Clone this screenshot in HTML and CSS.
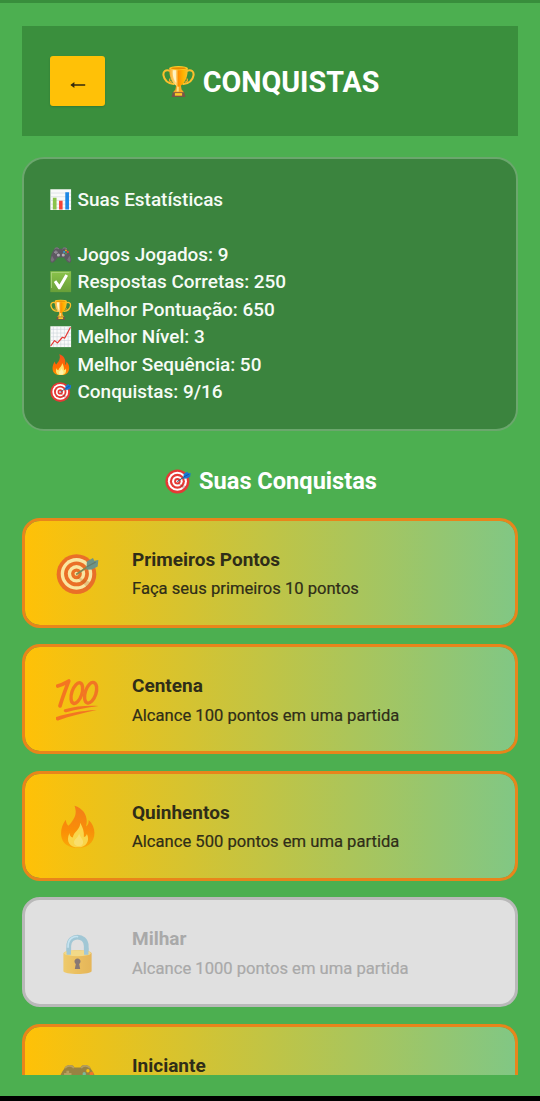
FILE: index.html
```html
<!DOCTYPE html>
<html lang="pt-BR">
<head>
<meta charset="utf-8">
<title>Conquistas</title>
<link rel="stylesheet" href="styles.css">
</head>
<body>
<svg class="sprite" aria-hidden="true">
  <defs>
    <linearGradient id="gold" x1="0" x2="1"><stop offset="0" stop-color="#f9a825"/><stop offset=".35" stop-color="#ffe082"/><stop offset=".5" stop-color="#ff8f00"/><stop offset=".75" stop-color="#ffb300"/><stop offset="1" stop-color="#fbc02d"/></linearGradient>
    <linearGradient id="flame" x1="0" x2="0" y1="0" y2="1"><stop offset="0" stop-color="#f4511e"/><stop offset=".6" stop-color="#ff6d00"/><stop offset="1" stop-color="#ff9800"/></linearGradient>
    <linearGradient id="leaf" x1="0" x2="0" y1="0" y2="1"><stop offset="0" stop-color="#8bc34a"/><stop offset="1" stop-color="#689f38"/></linearGradient>
    <linearGradient id="lockbody" x1="0" x2="1"><stop offset="0" stop-color="#f9bd20"/><stop offset=".5" stop-color="#f2a90b"/><stop offset="1" stop-color="#e99a00"/></linearGradient>
  </defs>
  <symbol id="trophy" viewBox="0 0 128 128">
    <path d="M32 23C14 15 3 26 6 41c3 17 18 30 39 33M96 23c18-8 29 3 26 18-3 17-18 30-39 33" fill="none" stroke="#fbc02d" stroke-width="8" stroke-linecap="round"/>
    <path d="M31 54c-4 5-1 11 6 12M97 54c4 5 1 11-6 12" fill="none" stroke="#f9a825" stroke-width="5" stroke-linecap="round"/>
    <path d="M42 105h44l5 19H37z" fill="#795548"/>
    <path d="M50 109h28v10H50z" fill="#ffca28"/>
    <path d="M55 78h18l3 17 9 11H43l9-11z" fill="#f9a825"/>
    <path d="M59 81h6v22h-9z" fill="#ffe082"/>
    <path d="M28 12c0 29 6 55 28 69 5 4 11 4 16 0 22-14 28-40 28-69z" fill="url(#gold)"/>
    <path d="M42 20c-2 20 3 39 14 49-2-17-2-32-2-49z" fill="#fff3c4"/>
    <ellipse cx="64" cy="12" rx="36" ry="8" fill="#ffca28"/><ellipse cx="64" cy="13" rx="29" ry="4" fill="#e68a00"/>
  </symbol>
  <symbol id="bars" viewBox="0 0 128 128">
    <path d="M2 2h124v124H2z" fill="#fafafa"/>
    <path d="M2 24h124M2 46h124M2 68h124M2 90h124M2 112h124" stroke="#c5d0d5" stroke-width="3"/>
    <path d="M17 52h22v70H17z" fill="#8bc34a"/><path d="M54 70h21v52H54z" fill="#f44336"/><path d="M91 20h22v102H91z" fill="#1e88e5"/>
  </symbol>
  <symbol id="gamepad" viewBox="0 0 128 128">
    <path d="M25 31c3-11 25-14 30-3h18c5-11 27-8 30 3 12 15 22 43 23 66 1 17-17 19-26 6L82 80H46l-18 23C19 116 1 114 2 97c1-23 11-51 23-66z" fill="#5d5961"/>
    <path d="M27 30c5-8 22-9 26 0M75 30c4-9 21-8 26 0" fill="none" stroke="#8d8791" stroke-width="5"/>
    <path d="M12 70C5 87 3 103 13 106l13-12zM116 70c7 17 9 33-1 36l-13-12z" fill="#77727a"/>
    <path d="M35 38v22M24 49h22" stroke="#8f8a93" stroke-width="8"/>
    <circle cx="50" cy="66" r="9" fill="#b4aeb8"/><circle cx="79" cy="66" r="9" fill="#b4aeb8"/>
    <circle cx="95" cy="38" r="5" fill="#ffc107"/><circle cx="106" cy="47" r="6" fill="#f44336"/><circle cx="84" cy="47" r="5" fill="#29b6f6"/><circle cx="95" cy="56" r="5" fill="#4caf50"/>
  </symbol>
  <symbol id="check" viewBox="0 0 128 128">
    <path d="M2 2h124v124H2z" fill="url(#leaf)"/><path d="M7 6h108v5H12v90H7z" fill="#aed581"/>
    <path d="M23 65l14-10 19 25 36-61 15 9-46 80H50z" fill="#fff"/>
  </symbol>
  <symbol id="trend" viewBox="0 0 128 128">
    <path d="M2 2h124v124H2z" fill="#fafafa"/>
    <path d="M20 2v124M42 2v124M64 2v124M86 2v124M108 2v124M2 20h124M2 42h124M2 64h124M2 86h124M2 108h124" stroke="#c6d0d5" stroke-width="3"/>
    <path d="M4 119l23-32 18 14 29-34 14 5 34-65" fill="none" stroke="#e53935" stroke-width="7" stroke-linejoin="round"/>
  </symbol>
  <symbol id="fire" viewBox="0 0 128 128">
    <path d="M55 2c31 9 42 37 34 62 7-3 9-12 8-19 24 21 22 58 1 73-18 12-48 13-66 1C10 106 10 69 29 44c1 9 4 15 8 18C50 47 66 30 55 2z" fill="url(#flame)"/>
    <path d="M72 53c1 20-19 26-22 44-7-2-10-8-10-14-12 26 2 43 26 43s36-20 26-40c-2 6-5 9-9 9 1-17-3-28-11-42z" fill="#ffe36e"/>
    <path d="M69 85c-3 14-18 18-15 29 2 10 22 12 26 1 4-11-8-17-11-30z" fill="#fff2a8"/>
  </symbol>
  <symbol id="target" viewBox="0 0 128 128">
    <circle cx="61" cy="66" r="59" fill="#e53935"/><circle cx="61" cy="65" r="47" fill="#fff"/><circle cx="61" cy="65" r="37" fill="#e53935"/><circle cx="61" cy="65" r="26" fill="#fff"/><circle cx="61" cy="65" r="16" fill="#e53935"/><circle cx="61" cy="65" r="6" fill="#fff"/>
    <path d="M60 72l42 17-11 15z" fill="#7f1d1d" opacity=".25"/>
    <path d="M60 67l43-29" stroke="#37657f" stroke-width="5"/>
    <path d="M91 43l1-15 18-10 4 8 12-2-2 19-17 9-16 1z" fill="#1976d2"/><path d="M92 44l26-14" stroke="#0d4fa0" stroke-width="4"/>
  </symbol>
  <symbol id="hundred" viewBox="0 0 128 128">
    <g fill="none" stroke="#f4432c" stroke-linecap="round" stroke-linejoin="round">
      <path d="M5 21C19 17 27 12 38 6 29 30 19 56 12 80" stroke-width="11"/>
      <ellipse cx="62" cy="42" rx="15" ry="32" transform="rotate(18 62 42)" stroke-width="10"/>
      <ellipse cx="103" cy="41" rx="16" ry="32" transform="rotate(18 103 41)" stroke-width="10"/>
    </g>
    <path d="M26 90c32-9 66-12 100-10-36 5-64 10-95 19-7 1-11-7-5-9zM3 112c31-9 70-18 118-20-40 9-80 18-113 31-8 3-13-8-5-11z" fill="#f4432c"/>
  </symbol>
  <symbol id="lock" viewBox="0 0 128 128">
    <path d="M38 67V42c0-36 52-36 52 0v25" fill="none" stroke="#78b7ce" stroke-width="14"/>
    <path d="M36 65V41c0-21 16-30 30-27" fill="none" stroke="#b3e5fc" stroke-width="5"/>
    <path d="M22 64c0-13 84-13 84 0v52c0 12-84 12-84 0z" fill="url(#lockbody)"/>
    <ellipse cx="64" cy="63" rx="40" ry="9" fill="#ffd54f"/>
    <path d="M38 47v21M90 47v21" stroke="#78b7ce" stroke-width="13"/>
    <path d="M59 95a9 9 0 1 1 10 0l3 15H56z" fill="#4e342e"/>
  </symbol>
</svg>

<div class="screen">
  <header class="header">
    <button class="back" aria-label="Voltar"><svg viewBox="0 0 16 8"><path d="M1.5 4H15.2" fill="none" stroke="currentColor" stroke-width="1.5"/><path d="M.4 4L4.4 1.1V6.9z" fill="currentColor"/></svg></button>
    <h1 class="title"><svg class="title-icon"><use href="#trophy"/></svg><span>CONQUISTAS</span></h1>
  </header>

  <section class="stats">
    <p class="stat stat-head"><svg><use href="#bars"/></svg><span>Suas Estatísticas</span></p>
    <p class="stat"><svg><use href="#gamepad"/></svg><span>Jogos Jogados: 9</span></p>
    <p class="stat"><svg><use href="#check"/></svg><span>Respostas Corretas: 250</span></p>
    <p class="stat"><svg><use href="#trophy"/></svg><span>Melhor Pontuação: 650</span></p>
    <p class="stat"><svg><use href="#trend"/></svg><span>Melhor Nível: 3</span></p>
    <p class="stat"><svg><use href="#fire"/></svg><span>Melhor Sequência: 50</span></p>
    <p class="stat"><svg><use href="#target"/></svg><span>Conquistas: 9/16</span></p>
  </section>

  <h2 class="subtitle"><svg><use href="#target"/></svg><span>Suas Conquistas</span></h2>

  <main class="list">
    <article class="card"><svg class="card-icon"><use href="#target"/></svg><div class="card-text"><h3>Primeiros Pontos</h3><p>Faça seus primeiros 10 pontos</p></div></article>
    <article class="card"><svg class="card-icon"><use href="#hundred"/></svg><div class="card-text"><h3>Centena</h3><p>Alcance 100 pontos em uma partida</p></div></article>
    <article class="card"><svg class="card-icon"><use href="#fire"/></svg><div class="card-text"><h3>Quinhentos</h3><p>Alcance 500 pontos em uma partida</p></div></article>
    <article class="card locked"><svg class="card-icon"><use href="#lock"/></svg><div class="card-text"><h3>Milhar</h3><p>Alcance 1000 pontos em uma partida</p></div></article>
    <article class="card"><svg class="card-icon"><use href="#gamepad"/></svg><div class="card-text"><h3>Iniciante</h3></div></article>
  </main>
</div>
</body>
</html>
```
FILE: styles.css
```css
* { box-sizing: border-box; }
body { margin: 0; background: #000; font-family: Roboto, "Liberation Sans", sans-serif; }
h1, h2, h3, p { margin: 0; }
svg { display: block; flex: none; }
.sprite { position: absolute; width: 0; height: 0; }

.screen {
  display: flex;
  flex-direction: column;
  width: 540px;
  height: 1096px;
  padding: 22.5px 22px 21.5px;
  border-top: 3px solid #388e3c;
  background: #4caf50;
  overflow: hidden;
}

.header {
  display: grid;
  grid-template-columns: 55px 1fr 55px;
  align-items: center;
  flex: none;
  height: 110px;
  padding: 0 27.5px;
  background: #3a8f3d;
}
.back {
  display: flex;
  justify-content: center;
  height: 50px;
  padding: 25.5px 0 0 2px;
  border: 0;
  border-radius: 3px;
  background: #ffc107;
  color: #33290f;
  box-shadow: 0 1px 2px rgba(0, 0, 0, .15);
}
.back svg { width: 16px; height: 8px; }
.title {
  display: flex;
  align-items: center;
  justify-content: center;
  gap: 8px;
  padding: 2px 0 0 1px;
  color: #fff;
  font-size: 28.7px;
  line-height: 36px;
  font-weight: 700;
}
.title-icon { width: 33px; height: 33px; }

.stats {
  flex: none;
  height: 274px;
  margin-top: 21.5px;
  padding: 26.5px 26px 0;
  border: 2px solid #6ba76d;
  border-radius: 22px;
  background: #3b843e;
}
.stat {
  display: flex;
  align-items: center;
  gap: 6px;
  height: 27.5px;
  color: #f6fbf6;
  font-size: 18.95px;
  font-weight: 500;
  white-space: nowrap;
}
.stat svg { width: 21.5px; height: 21.5px; }
.stat-head { margin-bottom: 27.5px; }

.subtitle {
  display: flex;
  align-items: center;
  justify-content: center;
  flex: none;
  gap: 8px;
  height: 30px;
  margin: 35px 0 21.5px;
  padding-left: 2px;
  color: #fff;
  font-size: 23.6px;
  font-weight: 700;
}
.subtitle svg { width: 26px; height: 26px; }

.list {
  display: flex;
  flex-direction: column;
  gap: 16.5px;
  flex: 1;
  min-height: 0;
  overflow: hidden;
}
.card {
  display: grid;
  grid-template-columns: 44px 1fr;
  column-gap: 32px;
  align-items: center;
  flex: none;
  height: 110px;
  padding: 0 30px 0 31px;
  border: 3px solid #e8851b;
  border-radius: 18px;
  background: linear-gradient(90deg, #ffc107, #81c784) padding-box;
  color: #2f2d18;
}
.card-icon { width: 43px; height: 43px; margin-top: 2px; opacity: .6; }
.card-text { height: 54px; margin-top: 2px; }
.card h3 { font-size: 19px; line-height: 26px; font-weight: 700; }
.card p {
  margin-top: 4.5px;
  font-size: 16.6px;
  line-height: 24px;
  white-space: nowrap;
  -webkit-text-stroke: .2px currentColor;
}
.locked { border-color: #b9b9b9; background: #e0e0e0; color: #a9a9a9; }
```
